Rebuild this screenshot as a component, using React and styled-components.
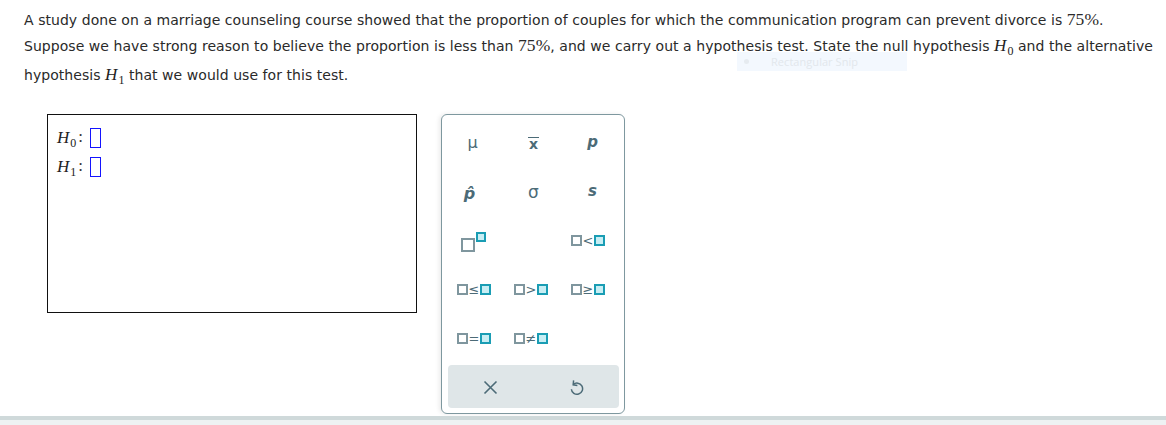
import React from "react"
import styled, { createGlobalStyle } from "styled-components"

const GlobalStyle = createGlobalStyle`
  html, body { margin: 0; padding: 0; background: #fff; }
  body { font-family: "DejaVu Sans", Verdana, sans-serif; }
`

const symbolColor = "#4c6b77"

export default function App() {
  return (
    <Page>
      <GlobalStyle />
      <Prompt>
        <Line>
          A study done on a marriage counseling course showed that the proportion of couples for
          which the communication program can prevent divorce is <MathNum>75%</MathNum>.
        </Line>
        <Line>
          Suppose we have strong reason to believe the proportion is less than <MathNum>75%</MathNum>, and
          we carry out a hypothesis test. State the null hypothesis <Hyp sub="0" /> and the alternative
        </Line>
        <Line $tall>
          hypothesis <Hyp sub="1" /> that we would use for this test.
        </Line>
        <SnipGhost>
          <SnipDot />
          Rectangular Snip
        </SnipGhost>
      </Prompt>

      <Work>
        <AnswerBox>
          <AnswerRow>
            <Hyp sub="0" />
            <Colon>:</Colon>
            <Slot />
          </AnswerRow>
          <AnswerRow>
            <Hyp sub="1" />
            <Colon>:</Colon>
            <Slot />
          </AnswerRow>
        </AnswerBox>

        <Palette>
          <KeyGrid>
            <Key><Mu>μ</Mu></Key>
            <Key><XBar>x</XBar></Key>
            <Key><ItalicSym>p</ItalicSym></Key>
            <Key><PHat>p&#770;</PHat></Key>
            <Key><Sigma>σ</Sigma></Key>
            <Key><ItalicSym>s</ItalicSym></Key>
            <Key>
              <Power>
                <GreyBox $size={14} />
                <TealBox $size={10} $raise />
              </Power>
            </Key>
            <Key />
            <Key><Relation op="<" /></Key>
            <Key><Relation op="≤" /></Key>
            <Key><Relation op=">" /></Key>
            <Key><Relation op="≥" /></Key>
            <Key><Relation op="=" /></Key>
            <Key><Relation op="≠" /></Key>
            <Key />
          </KeyGrid>
          <ActionBar>
            <ActionButton aria-label="clear">
              <svg width="15" height="15" viewBox="0 0 15 15">
                <path d="M1.5 1.5 L13.5 13.5 M13.5 1.5 L1.5 13.5" stroke={symbolColor} strokeWidth="1.6" fill="none" />
              </svg>
            </ActionButton>
            <ActionButton aria-label="undo">
              <svg width="16" height="18" viewBox="0 0 16 18">
                <path d="M5.2 5.6 A5.6 5.6 0 1 1 3.4 10.2" stroke={symbolColor} strokeWidth="1.5" fill="none" />
                <path d="M5.6 1.4 L5.2 5.8 L9.4 6.6" stroke={symbolColor} strokeWidth="1.5" fill="none" />
              </svg>
            </ActionButton>
          </ActionBar>
        </Palette>
      </Work>
      <BottomStripe />
    </Page>
  )
}

function Hyp({ sub }) {
  return (
    <HypWrap>
      <HypLetter>H</HypLetter>
      <HypSub>{sub}</HypSub>
    </HypWrap>
  )
}

function Relation({ op }) {
  return (
    <RelationWrap>
      <GreyBox $size={11} />
      <Op>{op}</Op>
      <TealBox $size={11} />
    </RelationWrap>
  )
}

const Page = styled.div`
  width: 1166px;
  height: 425px;
  position: relative;
  overflow: hidden;
  display: flex;
  flex-direction: column;
`

const Prompt = styled.div`
  position: relative;
  padding: 6px 0 0 24px;
  color: #2a2a2a;
  font-size: 14px;
  letter-spacing: 0.05px;
`

const Line = styled.div`
  white-space: nowrap;
  height: ${(p) => (p.$tall ? 32 : 26)}px;
  line-height: ${(p) => (p.$tall ? 34 : 26)}px;
`

const MathNum = styled.span`
  font-family: "Liberation Serif", "Times New Roman", serif;
  font-size: 17.5px;
`

const HypWrap = styled.span`
  font-family: "Liberation Serif", "Times New Roman", serif;
  font-size: 17px;
  color: #222;
`

const HypLetter = styled.span`
  font-style: italic;
`

const HypSub = styled.span`
  font-size: 12px;
  position: relative;
  top: 4px;
  margin-left: 1px;
`

const SnipGhost = styled.div`
  position: absolute;
  left: 737px;
  top: 52px;
  width: 170px;
  height: 19px;
  background: #f3f8fe;
  color: #e2e7ec;
  font-family: "Open Sans", sans-serif;
  font-size: 11px;
  display: flex;
  align-items: center;
  gap: 22px;
  padding-left: 7px;
  box-sizing: border-box;
`

const SnipDot = styled.span`
  width: 5px;
  height: 5px;
  border-radius: 50%;
  background: #e6ebf0;
`

const Work = styled.div`
  display: flex;
  align-items: flex-start;
  gap: 24px;
  margin: 24px 0 0 47px;
`

const AnswerBox = styled.div`
  width: 370px;
  height: 199px;
  box-sizing: border-box;
  border: 1px solid #111;
  padding: 12px 0 0 9px;
  display: flex;
  flex-direction: column;
  gap: 7px;
`

const AnswerRow = styled.div`
  display: flex;
  align-items: center;
  height: 22px;
`

const Colon = styled.span`
  font-family: "Liberation Serif", serif;
  font-size: 17px;
  color: #333;
  margin: 0 7px 0 2px;
  position: relative;
  top: -1px;
`

const Slot = styled.span`
  width: 11px;
  height: 20px;
  box-sizing: border-box;
  border: 1.5px solid #1414ff;
`

const Palette = styled.div`
  width: 184px;
  height: 300px;
  box-sizing: border-box;
  border: 1px solid #7e989f;
  border-radius: 6px;
  box-shadow: -2px 0 4px rgba(0, 0, 0, 0.08);
  padding: 0 5px 5px 6px;
  display: flex;
  flex-direction: column;
  justify-content: space-between;
  background: #fff;
`

const KeyGrid = styled.div`
  display: grid;
  grid-template-columns: repeat(3, 1fr);
  grid-auto-rows: 49px;
  padding-top: 3px;
`

const Key = styled.div`
  display: flex;
  align-items: center;
  justify-content: center;
  color: ${symbolColor};
`

const Mu = styled.span`
  font-family: "DejaVu Sans", sans-serif;
  font-size: 16px;
  margin-left: -8px;
`

const XBar = styled.span`
  font-family: "DejaVu Sans", sans-serif;
  font-weight: bold;
  font-size: 14px;
  border-top: 1.5px solid ${symbolColor};
  line-height: 13px;
  padding: 0 1px;
  margin-top: 3px;
`

const ItalicSym = styled.span`
  font-family: "DejaVu Sans", sans-serif;
  font-weight: bold;
  font-style: italic;
  font-size: 15px;
  line-height: 15px;
  margin-left: 4px;
`

const PHat = styled.span`
  font-family: "DejaVu Sans", sans-serif;
  font-weight: bold;
  font-style: italic;
  font-size: 16px;
  line-height: 22px;
  margin: 4px 0 0 -14px;
`

const Sigma = styled.span`
  font-family: "DejaVu Sans", sans-serif;
  font-size: 17px;
`

const Power = styled.div`
  display: flex;
  align-items: flex-start;
  margin: 8px 0 0 -6px;
`

const GreyBox = styled.span`
  display: block;
  width: ${(p) => p.$size}px;
  height: ${(p) => p.$size}px;
  box-sizing: border-box;
  border: 2px solid #7f969e;
  background: #fff;
`

const TealBox = styled.span`
  display: block;
  width: ${(p) => p.$size}px;
  height: ${(p) => p.$size}px;
  box-sizing: border-box;
  border: 2px solid #1a9db4;
  background: #c8eef4;
  margin-top: ${(p) => (p.$raise ? -6 : 0)}px;
  margin-left: ${(p) => (p.$raise ? 1 : 0)}px;
`

const RelationWrap = styled.div`
  display: flex;
  align-items: center;
  gap: 1px;
  margin-left: -6px;
`

const Op = styled.span`
  font-family: "DejaVu Sans", sans-serif;
  font-size: 13px;
  line-height: 12px;
  width: 10px;
  text-align: center;
  color: ${symbolColor};
`

const ActionBar = styled.div`
  height: 43px;
  background: #dfe6e8;
  border-radius: 4px;
  display: grid;
  grid-template-columns: 1fr 1fr;
`

const ActionButton = styled.div`
  display: flex;
  align-items: center;
  justify-content: center;
  padding-top: 2px;
`

const BottomStripe = styled.div`
  margin-top: auto;
  height: 9px;
  border-top: 4px solid #cfd9da;
  background: #eef2f3;
  box-sizing: border-box;
`
